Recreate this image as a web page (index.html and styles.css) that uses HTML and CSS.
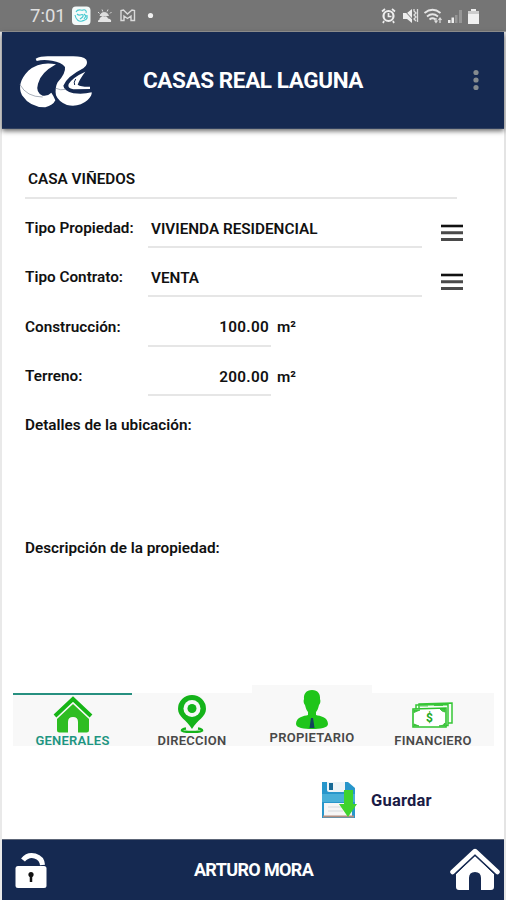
FILE: index.html
```html
<!DOCTYPE html>
<html lang="es">
<head>
    <meta charset="UTF-8">
    <meta name="viewport" content="width=device-width, initial-scale=1.0">
    <title>Casas Real Laguna</title>
    <link rel="stylesheet" href="styles.css">
</head>
<body>
    <div class="phone">
        <div class="status-bar">
            <span class="clock">7:01</span>
            <svg class="status-left" width="84" height="20" viewBox="0 0 84 20">
                <rect x="0" y="0.500" width="18.500" height="18.500" rx="4" fill="#f4fafa"/>
                <path d="M4 6c2-4 5-1 7-2s4 1 3 3M3 9c1 5 4 7 7 6s6-1 5-6M5 8c3 3 5-1 6 1s-2 3-3 4M12 8l2 2-2 3" fill="none" stroke="#43c9d0" stroke-width="1.100"/>
                <path d="M26 16h13q1-3-3-3.500-1-3-4-2-1-1-3 .5-2 1-1.500 2.500-2 .5-1.500 2.500z" fill="#e4e4e4"/>
                <path d="M28 9.500a4.500 4.500 0 0 1 8.500 0zM26 6l1.500 1.500M30 3.500l.8 2M36 3.500l-.8 2M39.500 6L38 7.500" fill="#ddd" stroke="#ddd"/>
                <path d="M49 4.500v10h3v-4.500l3.500 2.500 3.500-2.500v4.500h3.500v-10l-2.500-.5-4.500 4-4-4z" fill="none" stroke="#dadada" stroke-width="1.400"/>
                <circle cx="78.500" cy="9.500" r="2.600" fill="#f0f0f0"/>
            </svg>
            <svg class="status-right" width="101" height="20" viewBox="0 0 101 20">
                <circle cx="7.500" cy="10" r="5" fill="none" stroke="#eee" stroke-width="2.200"/>
                <path d="M7.500 7v3.500h3M1 5.500l3-2.500M11 3l3 2.500M3 15l-1 2M12 15l1 2" fill="none" stroke="#eee" stroke-width="1.700"/>
                <path d="M22 7h4l5-4v14l-5-4h-4z" fill="#eee"/>
                <path d="M22 3l13 14" stroke="#757575" stroke-width="1"/>
                <path d="M33 3v2l2 2-2 2 2 2-2 2 2 2M36.500 3v13" fill="none" stroke="#ddd" stroke-width="1.300"/>
                <path d="M43.500 7q8-6.500 16 0M46 10.500q5.500-4.500 11 0M48.500 13.500q3-2.500 6 0" fill="none" stroke="#e6e6e6" stroke-width="1.800"/>
                <path d="M55 12v5M59 17v-5M53.500 14.500l1.500 2 1.500-2M57.500 14l1.500-2 1.500 2" fill="none" stroke="#ddd" stroke-width="1.200"/>
                <path d="M67 17v-3h2.500v3zM70.500 17v-5.500h2.500v5.500z" fill="#eee"/>
                <path d="M74 17V9h2.500v8zM78 17V4h3v13z" fill="#969696"/>
                <path d="M90 3h5v2h3v13H87V5h3z" fill="#f0f0f0"/>
                <path d="M87 5h11v3H87z" fill="#ccc"/>
            </svg>
        </div>

        <header class="app-header">
            <svg class="logo" width="90" height="70" viewBox="0 0 270 210">
                <path d="M138 58Q90 48 55 77Q18 115 36 151Q61 188 106 187Q129 181 136 166Q130 151 124 143Q112 155 98 152Q76 142 84 116Q92 83 138 58Z" fill="#fff"/>
                <path d="M77 41Q91 34 113 34H190Q218 34 229 44Q236 58 220 70Q172 94 160 122Q162 138 190 145Q220 149 245 142Q247 151 233 165Q207 188 171 180Q146 171 138 151Q134 128 143 112Q168 84 165 66Q154 51 126 47Q99 43 80 48Z" fill="#fff"/>
                <path d="M226 80Q188 97 176 117Q171 130 190 133L240 132V125Q214 126 203 119Q209 102 226 80Z" fill="#fff"/>
                <path d="M197 102Q190 112 194 120" fill="none" stroke="#152951" stroke-width="3"/>
                <path d="M30 119Q50 156 98 156M138 130Q151 137 168 133" fill="none" stroke="#7b8797" stroke-width="2"/>
            </svg>
            <h1>CASAS REAL LAGUNA</h1>
            <svg class="more" width="8" height="22" viewBox="0 0 8 22">
                <circle cx="4" cy="3.500" r="2.600" fill="#858b8f"/>
                <circle cx="4" cy="11" r="2.600" fill="#858b8f"/>
                <circle cx="4" cy="18.500" r="2.600" fill="#858b8f"/>
            </svg>
        </header>

        <main>
            <form class="property-form">
                <div class="row">
                    <div class="field name">CASA VIÑEDOS</div>
                </div>
                <div class="row">
                    <span class="label">Tipo Propiedad:</span>
                    <div class="field select">VIVIENDA RESIDENCIAL</div>
                    <svg class="list-icon" width="22" height="18" viewBox="0 0 22 18">
                        <path d="M0 2h22" stroke="#111" stroke-width="2.600"/>
                        <path d="M0 8.700h22M0 15.400h22" stroke="#4a4a4a" stroke-width="3"/>
                    </svg>
                </div>
                <div class="row">
                    <span class="label">Tipo Contrato:</span>
                    <div class="field select">VENTA</div>
                    <svg class="list-icon" width="22" height="18" viewBox="0 0 22 18">
                        <path d="M0 2h22" stroke="#111" stroke-width="2.600"/>
                        <path d="M0 8.700h22M0 15.400h22" stroke="#4a4a4a" stroke-width="3"/>
                    </svg>
                </div>
                <div class="row">
                    <span class="label">Construcción:</span>
                    <div class="field number">100.00</div>
                    <span class="unit">m²</span>
                </div>
                <div class="row">
                    <span class="label">Terreno:</span>
                    <div class="field number">200.00</div>
                    <span class="unit">m²</span>
                </div>
                <div class="area">
                    <span class="label">Detalles de la ubicación:</span>
                </div>
                <div class="area">
                    <span class="label">Descripción de la propiedad:</span>
                </div>
            </form>

            <nav class="tabs">
                <div class="tab active">
                    <svg width="40" height="37" viewBox="0 0 40 37">
                        <path d="M2 20L20 3l18 17" fill="none" stroke="#16b516" stroke-width="4"/>
                        <path d="M20 8L4 23v11q0 2.500 2.500 2.500H15V26q0-5 5-5t5 5v10.500h8.500q2.500 0 2.500-2.500V23z" fill="#2ebd22"/>
                    </svg>
                    <span>GENERALES</span>
                </div>
                <div class="tab">
                    <svg width="32" height="39" viewBox="0 0 32 39">
                        <path d="M10 34.500q-4 .5-4 2 2 1.500 10 1.500t10-1.500q0-1.500-4-2" fill="none" stroke="#14b31a" stroke-width="2.500"/>
                        <path d="M16 1a14 14 0 0 0-14 14c0 8 9 11 14 20 5-9 14-12 14-20A14 14 0 0 0 16 1z" fill="#14b31a"/>
                        <circle cx="16" cy="14.500" r="8.500" fill="#f8f8f8"/>
                        <circle cx="16" cy="14.500" r="4.500" fill="#14b31a"/>
                    </svg>
                    <span>DIRECCION</span>
                </div>
                <div class="tab raised">
                    <svg width="34" height="41" viewBox="0 0 34 41">
                        <path d="M17 1C11 1 8.500 5 9 10c-1 2 0 5 1 6 1 4 2 6 3 7v3C9 27 1 28 1 35c0 4 8 5 16 5s16-1 16-5c0-7-8-8-12-9v-3c1-1 2-3 3-7 1-1 2-4 1-6 .5-5-2-9-8-9z" fill="#1fc51a"/>
                        <path d="M16 29h2l.5 3 1 7h-5l1-7z" fill="#13435b"/>
                    </svg>
                    <span>PROPIETARIO</span>
                </div>
                <div class="tab">
                    <svg class="money" width="42" height="28" viewBox="0 0 42 28">
                        <path d="M7 7V3l33-1v20h-4M4 8V4l32-.5v21h-3" fill="#f8fff8" stroke="#36c636" stroke-width="1.500"/>
                        <path d="M1 8l33-1v19H1z" fill="#fff" stroke="#2fc32f" stroke-width="1.600"/>
                        <path d="M2 9h6l-6 2.500zM28 8h5v3q-3 0-5-3zM2 23l5 2H2zM33 22v3h-6q4 0 6-3zM8 5h8M22 4.500h9" fill="#43cc43" stroke="#32bb32" stroke-width="0.800"/>
                        <text x="17.500" y="21" text-anchor="middle" font-size="12" font-weight="700" fill="#22a822">$</text>
                    </svg>
                    <span>FINANCIERO</span>
                </div>
            </nav>

            <div class="save">
                <svg width="36" height="38" viewBox="0 0 36 38">
                    <path d="M1 1h26l7 6v30H1z" fill="#2796cb"/>
                    <path d="M6 1h18v8q0 2-2 2H8q-2 0-2-2z" fill="#eef4f7"/>
                    <path d="M8 2h4v7H8z" fill="#176996"/>
                    <path d="M1 13h33v8H1z" fill="#48afd8"/>
                    <path d="M3 22h28v13H3z" fill="#f6f6f6"/>
                    <path d="M7 26h15M7 30h15" stroke="#d5dade"/>
                    <path d="M2 35.500h31" stroke="#b28e80" stroke-width="2"/>
                    <path d="M23 9h9v14h4l-9 13-9-13h5z" fill="#3fd32e"/>
                </svg>
                <span>Guardar</span>
            </div>
        </main>

        <footer class="app-footer">
            <svg width="32" height="36" viewBox="0 0 32 36">
                <path d="M8 8q5-6 12-4 7 2 7.500 9" fill="none" stroke="#fff" stroke-width="5"/>
                <rect x="0.500" y="14" width="31" height="22" rx="2.500" fill="#fff"/>
                <circle cx="16" cy="22.500" r="2.600" fill="#111"/>
                <path d="M16 22v8" stroke="#111" stroke-width="2.500"/>
            </svg>
            <span class="user">ARTURO MORA</span>
            <svg class="home" width="50" height="44" viewBox="0 0 50 44">
                <path d="M2.500 25L25 4l22.500 21" fill="none" stroke="#fff" stroke-width="4.500" stroke-linecap="round" stroke-linejoin="round"/>
                <path d="M25 9L6 27V40q0 3 3 3h10V31q0-6 6-6t6 6v12h10q3 0 3-3V27z" fill="#fff"/>
                <path d="M6 26.500L25 8.500l19 18" fill="none" stroke="#152951" stroke-width="1"/>
            </svg>
        </footer>
    </div>
</body>
</html>
```
FILE: styles.css
```css
* {
    box-sizing: border-box;
}
body {
    margin: 0;
    font-family: Roboto, 'Liberation Sans', sans-serif;
    background: #fff;
    color: #111;
}
.phone {
    display: flex;
    flex-direction: column;
    width: 506px;
    height: 900px;
    border-left: 2px solid #e9e9e9;
    border-right: 2px solid #e4e4e4;
}
.status-bar {
    display: flex;
    align-items: center;
    height: 32px;
    margin: 0 -2px;
    padding: 0 24px 0 30px;
    background: #757575;
    border-bottom: 1px solid #9a9a9a;
}
.clock {
    width: 42px;
    font-size: 18.5px;
    color: #e0e0e0;
}
.status-right {
    margin-left: auto;
}
.app-header {
    display: flex;
    align-items: center;
    height: 97px;
    background: #152951;
    border-bottom: 1px solid #30405f;
    box-shadow: 0 2px 5px rgba(0, 0, 0, 0.6);
}
.logo {
    margin-left: 8px;
}
h1 {
    width: 220px;
    margin: 0 0 0 43px;
    font-size: 22.5px;
    font-weight: 700;
    letter-spacing: -0.4px;
    white-space: nowrap;
    color: #fff;
}
.more {
    margin-left: auto;
    margin-right: 24px;
}
main {
    flex: 1;
    display: flex;
    flex-direction: column;
}
.property-form {
    height: 556px;
    padding: 20.7px 0 0 23px;
    font-size: 15.3px;
    font-weight: 600;
}
.row {
    display: flex;
    height: 49.3px;
}
.label {
    width: 123px;
    padding-top: 20px;
    line-height: 18px;
    white-space: nowrap;
}
.field {
    height: 49px;
    padding: 20.8px 3px 0;
    line-height: 18px;
    border-bottom: 2px solid #e6e6e6;
}
.field.name {
    width: 432px;
}
.field.select {
    width: 274px;
}
.field.number {
    width: 123px;
    padding-right: 2px;
    text-align: right;
    letter-spacing: 0.3px;
}
.unit {
    padding: 20.8px 0 0 6px;
    line-height: 18px;
}
.list-icon {
    margin: 25px 0 0 19px;
}
.area {
    display: flex;
    height: 122.7px;
}
.tabs {
    display: grid;
    grid-template-columns: 119px 120px 120px 122px;
    align-items: end;
    height: 61px;
    margin-left: 11px;
}
.tab {
    display: flex;
    flex-direction: column;
    align-items: center;
    justify-content: flex-end;
    height: 53px;
    background: #f8f8f8;
    font-size: 13px;
    font-weight: 600;
    letter-spacing: 0.25px;
    line-height: 11px;
    color: #484848;
}
.tab svg {
    margin-bottom: 2px;
}
.tab.active {
    border-top: 2px solid #279080;
    color: #1d9581;
}
.tab.raised {
    height: 61px;
    padding-bottom: 3px;
}
.tab .money {
    margin-bottom: 6px;
}
.save {
    display: flex;
    align-items: center;
    gap: 14px;
    margin: 35px 0 0 319px;
    font-size: 16.5px;
    font-weight: 700;
    letter-spacing: 0.2px;
    color: #1a1b46;
}
.app-footer {
    display: flex;
    align-items: center;
    height: 61px;
    padding: 0 4px 0 13px;
    background: #152951;
    border-top: 1px solid #5d6678;
}
.user {
    flex: 1;
    padding: 0 0 1px 10px;
    font-size: 18px;
    font-weight: 700;
    letter-spacing: -0.65px;
    text-align: center;
    color: #fff;
}
.home {
    margin-bottom: 2px;
}
```
